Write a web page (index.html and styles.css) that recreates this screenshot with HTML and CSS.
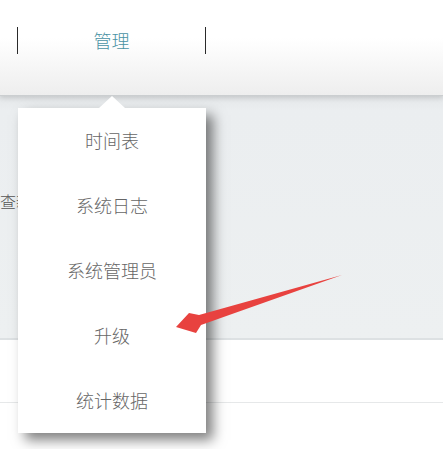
FILE: index.html
```html
<!DOCTYPE html>
<html lang="zh">
<head>
<meta charset="utf-8">
<title>管理</title>
<link rel="stylesheet" href="styles.css">
</head>
<body>
<div class="page">
  <header class="nav">
    <div class="nav-item">管理</div>
  </header>
  <section class="panel">
    <div class="panel-text">查新</div>
  </section>
  <div class="row"></div>
  <div class="row"></div>

  <ul class="dropdown">
    <li>时间表</li>
    <li>系统日志</li>
    <li>系统管理员</li>
    <li>升级</li>
    <li>统计数据</li>
  </ul>

  <svg class="pointer" width="443" height="449" viewBox="0 0 443 449">
    <polygon points="342,275 199,315 189,313 176,327 196,333 201,325" fill="#e8423f"/>
  </svg>
</div>
</body>
</html>
```

FILE: styles.css
```css
html, body {
  margin: 0;
  padding: 0;
}
body {
  width: 443px;
  height: 449px;
  overflow: hidden;
  background: #fff;
  font-family: "Noto Sans CJK SC", "Noto Sans", sans-serif;
}
.page {
  position: relative;
  width: 443px;
  height: 449px;
}
.nav {
  position: relative;
  z-index: 2;
  height: 96px;
  box-sizing: border-box;
  padding-top: 27px;
  background: linear-gradient(#ffffff 0%, #ffffff 40%, #eeeeee 100%);
  border-bottom: 1px solid #cbced0;
  box-shadow: 0 2px 5px rgba(0, 0, 0, 0.14);
}
.nav-item {
  margin-left: 17px;
  width: 187px;
  height: 27px;
  line-height: 27px;
  border-left: 1px solid #2a2a2a;
  border-right: 1px solid #2a2a2a;
  text-align: center;
  font-size: 18px;
  font-weight: 300;
  color: #4a93a4;
}
.panel {
  height: 244px;
  box-sizing: border-box;
  background: linear-gradient(#e4e7e9 0%, #ebeef0 6%, #edf0f1 100%);
  border-bottom: 2px solid #dde1e3;
  padding-top: 93px;
}
.panel-text {
  margin-left: 0;
  font-size: 16px;
  font-weight: 300;
  color: #555;
  line-height: 24px;
}
.row {
  height: 62px;
  border-bottom: 1px solid #e6e8e9;
}
.dropdown {
  position: absolute;
  z-index: 3;
  left: 18px;
  top: 108px;
  width: 188px;
  margin: 0;
  padding: 0;
  list-style: none;
  background: #fff;
  box-shadow: 7px 7px 12px rgba(0, 0, 0, 0.5);
}
.dropdown::before {
  content: "";
  position: absolute;
  left: 81px;
  top: -12px;
  border-left: 13px solid transparent;
  border-right: 13px solid transparent;
  border-bottom: 12px solid #fff;
}
.dropdown li {
  height: 65px;
  line-height: 65px;
  text-align: center;
  font-size: 18px;
  font-weight: 300;
  color: #666;
}
.pointer {
  position: absolute;
  z-index: 4;
  left: 0;
  top: 0;
}
```
